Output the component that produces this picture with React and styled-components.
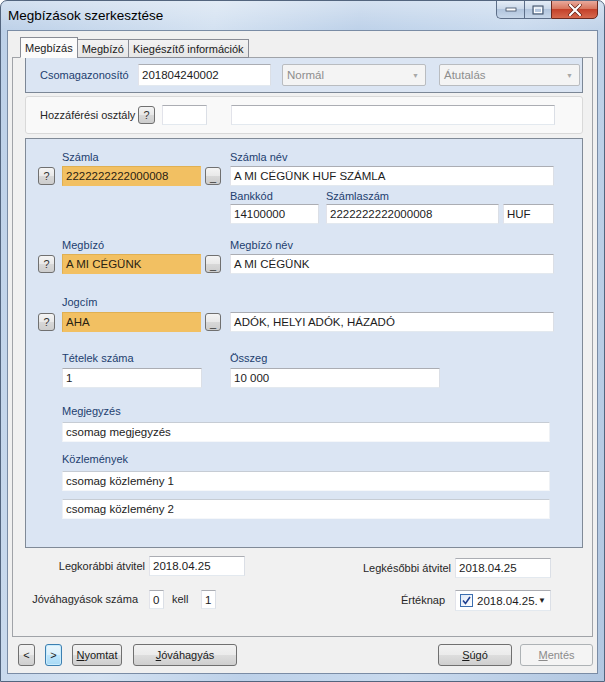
import styled, { createGlobalStyle, css } from 'styled-components'

const GlobalStyle = createGlobalStyle`
  html, body {
    margin: 0;
    padding: 0;
  }
  body {
    font-family: "Liberation Sans", Arial, sans-serif;
    font-size: 11px;
    color: #262626;
  }
`

function App () {
  return (
    <>
      <GlobalStyle />
      <Window>
        <TitleBar>
          <Title>Megbízások szerkesztése</Title>
          <Captions>
            <CaptionButton $w={28}>
              <svg width='12' height='6' viewBox='0 0 12 6'><rect x='1' y='1' width='10' height='3' fill='#fff' stroke='#3b4a60' strokeWidth='0.8' /></svg>
            </CaptionButton>
            <CaptionButton $w={27}>
              <svg width='12' height='10' viewBox='0 0 12 10'><rect x='1' y='1' width='10' height='8' fill='none' stroke='#3b4a60' strokeWidth='1' /><rect x='2.5' y='3' width='7' height='4.5' fill='none' stroke='#fff' strokeWidth='1' /></svg>
            </CaptionButton>
            <CloseButton>
              <svg width='14' height='12' viewBox='0 0 14 12'><path d='M2 1 L12 11 M12 1 L2 11' stroke='#5a1b10' strokeWidth='3.4' strokeLinecap='round' /><path d='M2 1 L12 11 M12 1 L2 11' stroke='#fff' strokeWidth='2.2' strokeLinecap='round' /></svg>
            </CloseButton>
          </Captions>
        </TitleBar>

        <Client>
          <TabStrip>
            <Tab $active>Megbízás</Tab>
            <Tab>Megbízó</Tab>
            <Tab>Kiegészítő információk</Tab>
          </TabStrip>

          <TabPage>
            <HeaderStrip>
              <Label $w={98} $color='#22406f'>Csomagazonosító</Label>
              <TextBox $w={133} $h={22}>201804240002</TextBox>
              <Combo $w={144} $ml={11}>Normál<Arrow>▼</Arrow></Combo>
              <Combo $w={141} $ml={13}>Átutalás<Arrow>▼</Arrow></Combo>
            </HeaderStrip>

            <AccessPanel>
              <Label $w={98}>Hozzáférési osztály</Label>
              <QButton>?</QButton>
              <TextBox $w={45} $ml={7} />
              <TextBox $w={324} $ml={24} />
            </AccessPanel>

            <MainPanel>
              <Row $top={12}>
                <Label $ml={36} $w={168} $color='#22406f'>Számla</Label>
                <Label $color='#22406f'>Számla név</Label>
              </Row>
              <Row $top={2}>
                <QButton $ml={12}>?</QButton>
                <LookupBox>2222222222000008</LookupBox>
                <DotsButton>_</DotsButton>
                <TextBox $w={324} $ml={9}>A MI CÉGÜNK HUF SZÁMLA</TextBox>
              </Row>
              <Row $top={4}>
                <Label $ml={204} $w={96} $color='#22406f'>Bankkód</Label>
                <Label $color='#22406f'>Számlaszám</Label>
              </Row>
              <Row $top={1}>
                <TextBox $w={89} $ml={204}>14100000</TextBox>
                <TextBox $w={173} $ml={7}>2222222222000008</TextBox>
                <TextBox $w={51} $ml={4}>HUF</TextBox>
              </Row>

              <Row $top={15}>
                <Label $ml={36} $w={168} $color='#22406f'>Megbízó</Label>
                <Label $color='#22406f'>Megbízó név</Label>
              </Row>
              <Row $top={2}>
                <QButton $ml={12}>?</QButton>
                <LookupBox>A MI CÉGÜNK</LookupBox>
                <DotsButton>_</DotsButton>
                <TextBox $w={324} $ml={9}>A MI CÉGÜNK</TextBox>
              </Row>

              <Row $top={22}>
                <Label $ml={36} $color='#22406f'>Jogcím</Label>
              </Row>
              <Row $top={3}>
                <QButton $ml={12}>?</QButton>
                <LookupBox>AHA</LookupBox>
                <DotsButton>_</DotsButton>
                <TextBox $w={324} $ml={9}>ADÓK, HELYI ADÓK, HÁZADÓ</TextBox>
              </Row>

              <Row $top={20}>
                <Label $ml={36} $w={168} $color='#22406f'>Tételek száma</Label>
                <Label $color='#22406f'>Összeg</Label>
              </Row>
              <Row $top={3}>
                <TextBox $w={140} $ml={36}>1</TextBox>
                <TextBox $w={210} $ml={28}>10 000</TextBox>
              </Row>

              <Row $top={17}>
                <Label $ml={36} $color='#22406f'>Megjegyzés</Label>
              </Row>
              <Row $top={4}>
                <TextBox $w={488} $ml={36} $flat>csomag megjegyzés</TextBox>
              </Row>

              <Row $top={11}>
                <Label $ml={36} $color='#22406f'>Közlemények</Label>
              </Row>
              <Row $top={5}>
                <TextBox $w={488} $ml={36} $flat>csomag közlemény 1</TextBox>
              </Row>
              <Row $top={8}>
                <TextBox $w={488} $ml={36} $flat>csomag közlemény 2</TextBox>
              </Row>
            </MainPanel>

            <BottomRow $top={8}>
              <FieldGroup>
                <Label $w={132} $right>Legkorábbi átvitel</Label>
                <TextBox $w={96} $ml={4}>2018.04.25</TextBox>
              </FieldGroup>
              <FieldGroup $top={2}>
                <Label $w={100} $right>Legkésőbbi átvitel</Label>
                <TextBox $w={96} $ml={4}>2018.04.25</TextBox>
              </FieldGroup>
            </BottomRow>

            <BottomRow $top={12}>
              <FieldGroup>
                <Label $w={125} $right>Jóváhagyások száma</Label>
                <TextBox $w={15} $h={19} $ml={11}>0</TextBox>
                <Label $ml={8} $w={21}>kell</Label>
                <TextBox $w={15} $h={19} $ml={8}>1</TextBox>
              </FieldGroup>
              <FieldGroup>
                <Label $w={90} $right>Értéknap</Label>
                <DatePicker>
                  <Check>
                    <svg width='9' height='9' viewBox='0 0 9 9'><path d='M1 4.5 L3.5 7.5 L8 1' fill='none' stroke='#1f3f8f' strokeWidth='1.6' /></svg>
                  </Check>
                  <span>2018.04.25.</span>
                  <DateArrow>▼</DateArrow>
                </DatePicker>
              </FieldGroup>
            </BottomRow>
          </TabPage>

          <ButtonBar>
            <Button $w={17} $ml={6}>&lt;</Button>
            <Button $w={17} $ml={10} $focused>&gt;</Button>
            <Button $w={50} $ml={10}><u>N</u>yomtat</Button>
            <Button $w={104} $ml={11}><u>J</u>óváhagyás</Button>
            <Spacer />
            <Button $w={74}><u>S</u>úgó</Button>
            <Button $w={73} $ml={8} $disabled><u>M</u>entés</Button>
          </ButtonBar>
        </Client>
      </Window>
    </>
  )
}

const Window = styled.div`
  width: 605px;
  height: 682px;
  box-sizing: border-box;
  border: 1px solid #53657e;
  border-radius: 7px 7px 0 0;
  padding: 0 6px 7px 6px;
  display: flex;
  flex-direction: column;
  background:
    linear-gradient(180deg, rgba(255,255,255,0.35) 0%, rgba(255,255,255,0) 30px),
    linear-gradient(100deg, #bcd0e8 0%, #d3e1f1 30%, #bdd1e9 50%, #c9daee 72%, #b2c7e1 100%);
  overflow: hidden;
`

const TitleBar = styled.div`
  height: 29px;
  display: flex;
  justify-content: space-between;
  align-items: flex-start;
`

const Title = styled.div`
  font-family: "Liberation Sans", Arial, sans-serif;
  font-size: 13.5px;
  color: #000;
  margin-top: 7px;
  margin-left: 1px;
`

const Captions = styled.div`
  display: flex;
  margin-top: -1px;
`

const CaptionButton = styled.div`
  width: ${p => p.$w}px;
  height: 19px;
  box-sizing: border-box;
  display: flex;
  align-items: center;
  justify-content: center;
  border: 1px solid #5d6e88;
  border-right: none;
  background: linear-gradient(180deg, #e4ecf6 0%, #cbd9ea 45%, #b2c5dd 50%, #c7d7ea 100%);
  &:first-child {
    border-radius: 0 0 0 5px;
  }
`

const CloseButton = styled.div`
  width: 47px;
  height: 19px;
  box-sizing: border-box;
  display: flex;
  align-items: center;
  justify-content: center;
  border: 1px solid #6b2a20;
  border-radius: 0 0 5px 0;
  background: linear-gradient(180deg, #e9a99c 0%, #d8775f 45%, #c4412a 50%, #d6694e 100%);
`

const Client = styled.div`
  flex: 1;
  display: flex;
  flex-direction: column;
  border: 1px solid #7a8ca5;
  background: #f0f0f0;
  padding: 6px 4px 0 4px;
`

const TabStrip = styled.div`
  display: flex;
  align-items: flex-end;
  height: 21px;
  padding-left: 8px;
  position: relative;
  z-index: 1;
  margin-bottom: -1px;
`

const Tab = styled.div`
  box-sizing: border-box;
  height: ${p => (p.$active ? 21 : 19)}px;
  padding: 0 4px;
  display: flex;
  align-items: center;
  border: 1px solid #898c95;
  margin-left: -1px;
  color: #1a1a1a;
  background: ${p => (p.$active ? '#fbfbfb' : 'linear-gradient(180deg, #f3f3f3 0%, #e6e6e6 100%)')};
  border-bottom: ${p => (p.$active ? '1px solid #fbfbfb' : '1px solid #898c95')};
  &:first-child {
    margin-left: 0;
  }
`

const TabPage = styled.div`
  height: 580px;
  box-sizing: border-box;
  border: 1px solid #a0a3a8;
  background: #f1f1f1;
  display: flex;
  flex-direction: column;
`

const PanelBase = css`
  box-sizing: border-box;
  width: 558px;
  margin-left: 12px;
`

const HeaderStrip = styled.div`
  ${PanelBase}
  height: 35px;
  display: flex;
  align-items: center;
  padding-left: 14px;
  background: #dbe5f3;
  border: 1px solid #7c8796;
  border-top: none;
`

const AccessPanel = styled.div`
  ${PanelBase}
  height: 38px;
  margin-top: 3px;
  display: flex;
  align-items: center;
  padding-left: 14px;
  background: #f9f9f9;
  border: 1px solid #d9d9d9;
  border-radius: 3px;
`

const MainPanel = styled.div`
  ${PanelBase}
  height: 410px;
  margin-top: 4px;
  background: #dbe5f3;
  border: 1px solid #808a97;
  display: flex;
  flex-direction: column;
`

const Row = styled.div`
  display: flex;
  align-items: center;
  margin-top: ${p => p.$top || 0}px;
`

const Label = styled.div`
  flex: none;
  height: 13px;
  line-height: 13px;
  white-space: nowrap;
  color: ${p => p.$color || '#262626'};
  width: ${p => (p.$w ? `${p.$w}px` : 'auto')};
  margin-left: ${p => p.$ml || 0}px;
  text-align: ${p => (p.$right ? 'right' : 'left')};
`

const TextBox = styled.div`
  flex: none;
  box-sizing: border-box;
  width: ${p => p.$w}px;
  height: ${p => p.$h || 20}px;
  margin-left: ${p => p.$ml || 0}px;
  padding: 0 3px;
  display: flex;
  align-items: center;
  white-space: nowrap;
  overflow: hidden;
  background: #fff;
  color: #1c1c1c;
  font-size: 11.5px;
  border: 1px solid;
  border-color: ${p => (p.$flat ? '#c6ccd4 #eef1f5 #f5f7fa #eef1f5' : '#abadb3 #dbdfe6 #e3e9ef #e2e3ea')};
`

const LookupBox = styled(TextBox)`
  width: 139px;
  margin-left: 7px;
  background: #f2c062;
  border-color: #e0b052 #f2c062 #f2c062 #e0b052;
  color: #2a2313;
`

const QButton = styled.div`
  flex: none;
  box-sizing: border-box;
  width: 17px;
  height: 18px;
  margin-left: ${p => p.$ml || 0}px;
  display: flex;
  align-items: center;
  justify-content: center;
  border: 1px solid #707070;
  border-radius: 3px;
  color: #333;
  font-size: 11px;
  background: linear-gradient(180deg, #f4f4f4 0%, #e8e8e8 50%, #d8d8d8 51%, #cdcdcd 100%);
`

const DotsButton = styled(QButton)`
  width: 16px;
  margin-left: 4px;
  align-items: flex-end;
  line-height: 14px;
`

const Combo = styled.div`
  flex: none;
  box-sizing: border-box;
  width: ${p => p.$w}px;
  height: 22px;
  margin-left: ${p => p.$ml || 0}px;
  padding: 0 4px;
  display: flex;
  align-items: center;
  justify-content: space-between;
  border: 1px solid #b9bcc0;
  border-radius: 2px;
  background: #f4f4f4;
  color: #8d8d8d;
  font-size: 11.5px;
`

const Arrow = styled.span`
  font-size: 7px;
  color: #a8a8a8;
  margin-right: 2px;
`

const BottomRow = styled.div`
  display: flex;
  justify-content: space-between;
  align-items: flex-start;
  margin-top: ${p => p.$top}px;
  padding-right: 41px;
`

const FieldGroup = styled.div`
  display: flex;
  align-items: center;
  margin-top: ${p => p.$top || 0}px;
`

const DatePicker = styled.div`
  box-sizing: border-box;
  width: 96px;
  height: 21px;
  margin-left: 10px;
  display: flex;
  align-items: center;
  padding: 0 4px;
  background: #fff;
  border: 1px solid;
  border-color: #abadb3 #dbdfe6 #e3e9ef #e2e3ea;
  font-size: 11.5px;
  color: #1c1c1c;
`

const Check = styled.div`
  box-sizing: border-box;
  width: 13px;
  height: 13px;
  margin-right: 4px;
  display: flex;
  align-items: center;
  justify-content: center;
  border: 1px solid #3c6fb0;
  background: linear-gradient(135deg, #dfe9f7, #ffffff);
`

const DateArrow = styled.span`
  margin-left: auto;
  font-size: 8px;
  color: #222;
`

const ButtonBar = styled.div`
  display: flex;
  align-items: center;
  margin-top: 7px;
`

const Spacer = styled.div`
  flex: 1;
`

const Button = styled.div`
  flex: none;
  box-sizing: border-box;
  width: ${p => p.$w}px;
  height: 22px;
  margin-left: ${p => p.$ml || 0}px;
  display: flex;
  align-items: center;
  justify-content: center;
  border: 1px solid #707070;
  border-radius: 3px;
  color: #1a1a1a;
  background: linear-gradient(180deg, #f2f2f2 0%, #ebebeb 50%, #dddddd 51%, #cfcfcf 100%);
  ${p => p.$focused && css`
    border-color: #3c7fb1;
    background: linear-gradient(180deg, #eaf6fd 0%, #d9f0fc 50%, #bee6fd 51%, #a7d9f5 100%);
    box-shadow: inset 0 0 0 1px #c8ecfd;
  `}
  ${p => p.$disabled && css`
    border-color: #adb2b5;
    background: #f4f4f4;
    color: #8b8b8b;
  `}
  u {
    text-decoration: underline;
  }
`

export default App
